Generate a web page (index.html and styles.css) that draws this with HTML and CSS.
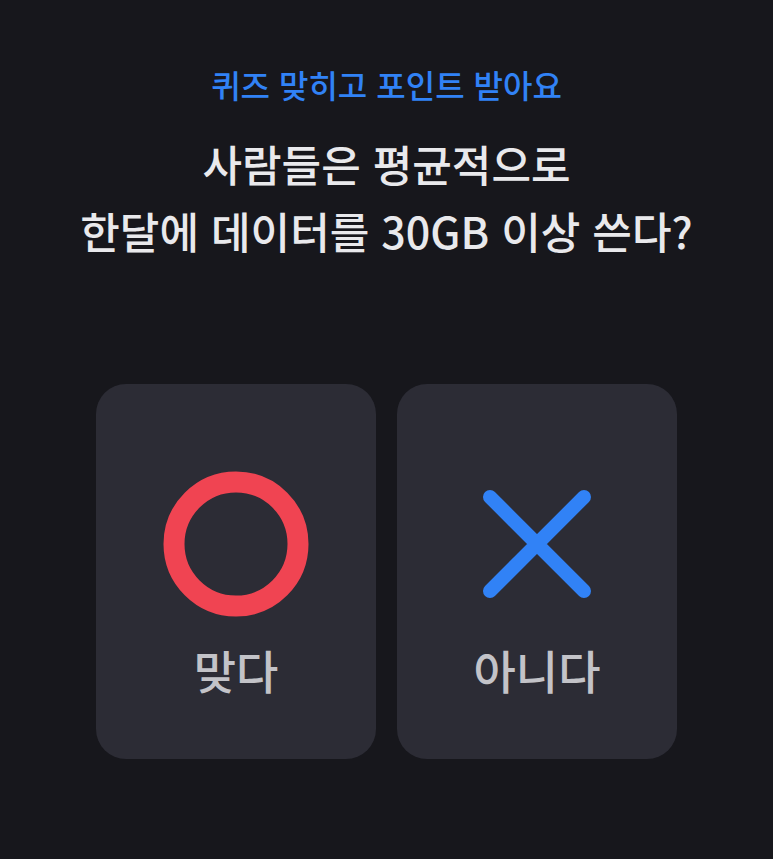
FILE: index.html
```html
<!DOCTYPE html>
<html lang="ko">
<head>
    <meta charset="UTF-8">
    <meta name="viewport" content="width=device-width, initial-scale=1.0">
    <title>퀴즈</title>
    <link rel="stylesheet" href="styles.css">
</head>
<body>
    <div class="quiz">
        <p class="quiz-label">퀴즈 맞히고 포인트 받아요</p>
        <h1 class="quiz-question">사람들은 평균적으로<br>한달에 데이터를 30GB 이상 쓴다?</h1>

        <div class="answers">
            <button class="answer">
                <svg class="answer-icon" width="146" height="146" viewBox="0 0 146 146">
                    <circle cx="73" cy="73" r="62" fill="none" stroke="#f04452" stroke-width="21"/>
                </svg>
                <span class="answer-text">맞다</span>
            </button>
            <button class="answer">
                <svg class="answer-icon" width="146" height="146" viewBox="0 0 146 146">
                    <path d="M26 26 L120 120 M120 26 L26 120" fill="none" stroke="#3182f6" stroke-width="14" stroke-linecap="round"/>
                </svg>
                <span class="answer-text">아니다</span>
            </button>
        </div>
    </div>
</body>
</html>
```

FILE: styles.css
```css
body {
    margin: 0;
    background-color: #17171c;
    font-family: "Noto Sans CJK KR", "Noto Sans", sans-serif;
    color: #e9e9ec;
}

.quiz {
    display: flex;
    flex-direction: column;
    align-items: center;
    padding-top: 61px;
}

.quiz-label {
    margin: 0;
    font-size: 32px;
    font-weight: 500;
    line-height: 46px;
    color: #3182f6;
}

.quiz-question {
    margin: 23px 0 0;
    font-size: 43px;
    font-weight: 500;
    line-height: 67px;
    text-align: center;
    color: #e9e9ec;
}

.answers {
    display: flex;
    gap: 21px;
    margin-top: 120px;
}

.answer {
    display: flex;
    flex-direction: column;
    align-items: center;
    width: 280px;
    height: 375px;
    padding: 87px 0 0;
    border: none;
    border-radius: 30px;
    background-color: #2c2c35;
    font-family: inherit;
    cursor: pointer;
}

.answer-icon {
    display: block;
}

.answer-text {
    margin-top: 22px;
    font-size: 46px;
    font-weight: 500;
    line-height: 60px;
    color: #c3c3c8;
}
```
